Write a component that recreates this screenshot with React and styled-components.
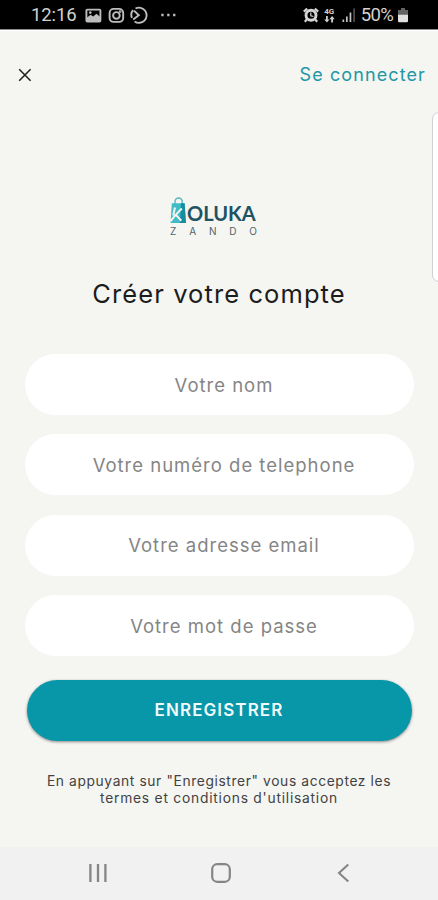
import * as React from 'react';
import styled, { createGlobalStyle } from 'styled-components';

const fields = [
    { name: 'name', label: 'Votre nom', type: 'text' },
    { name: 'phone', label: 'Votre numéro de telephone', type: 'tel' },
    { name: 'email', label: 'Votre adresse email', type: 'email' },
    { name: 'password', label: 'Votre mot de passe', type: 'password' },
]

function StatusIcons() {
    return (
        <svg width="92" height="20" viewBox="0 0 92 20" fill="none" stroke="#bdbdbd" strokeWidth="1.9">
            <rect x="1.4" y="4.6" width="14" height="12" rx="1" />
            <path d="M2 16v-3.4l3.6-2.8 2.6 1.8 3.2-2.8 3.6 3V16z" fill="#bdbdbd" stroke="none" />
            <circle cx="5.3" cy="7.6" r="1.3" fill="#bdbdbd" stroke="none" />
            <rect x="24.6" y="3.9" width="13.6" height="13" rx="4" />
            <circle cx="31.4" cy="10.4" r="3.3" />
            <circle cx="35.2" cy="6.6" r=".5" />
            <path d="M50.5 3.5A7.6 7.6 0 1 1 49.6 16.4M46.9 12.8A7.6 7.6 0 0 1 48 5.2M49 5.6l4.8 4.6-5.6 4.4" />
            <path d="M76.3 10h2.3M82.2 10h2.3M88.1 10h2.3" strokeWidth="2.3" />
        </svg>
    )
}

function AlarmIcon() {
    return (
        <svg width="16" height="16" viewBox="0 0 16 16" fill="none" stroke="#d4d4d4">
            <circle cx="8" cy="8.3" r="5" strokeWidth="2.9" />
            <path d="M7.8 5.5v3.2l2.6 .8" strokeWidth="1.2" />
            <path d="M.8 4.6l3.4-3M11.8 1.6l3.4 3M4 12.3l-2.2 2.5M12 12.3l2.2 2.5" strokeWidth="2.2" />
        </svg>
    )
}

function DataArrows() {
    return (
        <svg width="11" height="7" viewBox="0 0 11 7" fill="#d0d0d0">
            <path d="M2 0h1.8v3.4h1.7L2.9 6.6.2 3.4H2zM7.2 6.6H9V3.2h1.7L8.1 0 5.4 3.2h1.8z" />
        </svg>
    )
}

function SignalIcon() {
    return (
        <svg width="14" height="15" viewBox="0 0 14 15">
            <path d="M.5 11.5h1.7V14H.5zM4 8.5h1.7V14H4zM7.6 4.5h1.7V14H7.6z" fill="#c4c4c4" />
            <path d="M11.3.5h1.6V14h-1.6z" fill="#555" />
        </svg>
    )
}

function BatteryIcon() {
    return (
        <svg width="10" height="15" viewBox="0 0 10 15">
            <path d="M3 0h4v2h3v5H0V2h3z" fill="#636363" />
            <path d="M0 6.8h10V13a1.2 1.2 0 0 1-1.2 1.2H1.2A1.2 1.2 0 0 1 0 13z" fill="#e0e0e0" />
        </svg>
    )
}

function BagIcon() {
    return (
        <svg width="17" height="27" viewBox="0 0 17 27">
            <path d="M5 8V4.6a3.6 3.6 0 0 1 7.2 0V8" fill="none" stroke="#55b9c1" strokeWidth="1.4" />
            <path d="M1.8 6.2h12.8L16 26H.6z" fill="#3fbcc5" />
            <path d="M11 6.2h3.6L16 26H9.8z" fill="#188d9d" />
            <path d="M5 10.5L3.2 18.5M11.8 11.5L5 18.6.6 24M6 18.4c2 .8 3 3.6 5.4 5.2" fill="none" stroke="#f5f5f2" strokeWidth="2" />
        </svg>
    )
}

export default function App() {
    return (
        <>
            <GlobalStyle />
            <Screen>
                <StatusBar>
                    <StatusLeft>
                        <StatusText>12:16</StatusText>
                        <StatusIcons />
                    </StatusLeft>
                    <StatusRight>
                        <AlarmIcon />
                        <Network>
                            <NetworkLabel>4G</NetworkLabel>
                            <DataArrows />
                        </Network>
                        <SignalIcon />
                        <StatusText $tight>50%</StatusText>
                        <BatteryIcon />
                    </StatusRight>
                </StatusBar>
                <Header>
                    <CloseButton aria-label="Fermer">
                        <svg width="14" height="14" viewBox="0 0 14 14" stroke="#222" strokeWidth="1.6">
                            <path d="M1.2 1.2l11.4 11.6M12.6 1.2L1.2 12.8" />
                        </svg>
                    </CloseButton>
                    <LoginLink href="#">Se connecter</LoginLink>
                </Header>
                <Logo>
                    <LogoTop>
                        <BagIcon />
                        <LogoName>OLUKA</LogoName>
                    </LogoTop>
                    <LogoSub>
                        {'ZANDO'.split('').map((letter, i) => <span key={i}>{letter}</span>)}
                    </LogoSub>
                </Logo>
                <Title>Créer votre compte</Title>
                <Form onSubmit={(e) => e.preventDefault()}>
                    {fields.map((field) => (
                        <Field
                            key={field.name}
                            name={field.name}
                            type={field.type}
                            placeholder={field.label}
                        />
                    ))}
                    <SubmitButton>ENREGISTRER</SubmitButton>
                </Form>
                <Terms>
                    <TermsLine $spacing="0.62px">En appuyant sur "Enregistrer" vous acceptez les</TermsLine>
                    <TermsLine $spacing="0.77px">termes et conditions d'utilisation</TermsLine>
                </Terms>
                <AndroidNav>
                    <svg width="20" height="20" viewBox="0 0 20 20" stroke="#858585" strokeWidth="2.3">
                        <path d="M2.4 1v18M10 1v18M17.4 1v18" />
                    </svg>
                    <svg width="20" height="20" viewBox="0 0 20 20" fill="none" stroke="#858585" strokeWidth="2.2">
                        <rect x="1.2" y="1.2" width="17.6" height="17.6" rx="5" />
                    </svg>
                    <svg width="20" height="20" viewBox="0 0 20 20" fill="none" stroke="#858585" strokeWidth="2.1">
                        <path d="M15.3 1.5L6 10l9.3 8.5" />
                    </svg>
                </AndroidNav>
                <EdgePanel />
            </Screen>
        </>
    )
}

const GlobalStyle = createGlobalStyle`
  * {
    box-sizing: border-box;
  }
  body {
    margin: 0;
    background: #f5f5f2;
    font-family: Inter, "Noto Sans", sans-serif;
  }
  svg {
    display: block;
    flex: none;
  }
`

const Screen = styled.main`
  position: relative;
  display: flex;
  flex-direction: column;
  width: 438px;
  height: 900px;
  overflow: hidden;
  background: #f5f5f2;
`

const StatusBar = styled.header`
  display: flex;
  justify-content: space-between;
  align-items: center;
  height: 30px;
  flex: none;
  padding: 1px 30px 0 31px;
  background: #000;
  border-bottom: 1px solid #8a8a8a;
  box-shadow: 0 1px 0 #fff;
`

const StatusLeft = styled.div`
  display: flex;
  align-items: center;
  gap: 8px;
`

const StatusRight = styled.div`
  display: flex;
  align-items: center;
  gap: 5px;
`

const StatusText = styled.span`
  font-family: Roboto, sans-serif;
  font-size: 18.5px;
  line-height: 20px;
  color: #d2d2d2;
  letter-spacing: ${({ $tight }) => $tight ? '-0.7px' : '-0.1px'};
`

const Network = styled.div`
  display: flex;
  flex-direction: column;
  align-items: center;
  margin-right: 2px;
`

const NetworkLabel = styled.span`
  font: bold 8px/8px Roboto, sans-serif;
  color: #d0d0d0;
`

const Header = styled.nav`
  display: flex;
  justify-content: space-between;
  align-items: center;
  height: 90px;
  flex: none;
  padding: 0 12px 0 18px;
`

const CloseButton = styled.button`
  padding: 0;
  border: 0;
  background: none;
  cursor: pointer;
`

const LoginLink = styled.a`
  font-size: 18px;
  line-height: 24px;
  letter-spacing: 1.1px;
  color: #2397a3;
  text-decoration: none;
`

const Logo = styled.div`
  display: flex;
  flex-direction: column;
  width: 87px;
  margin: 77px 0 0 170px;
`

const LogoTop = styled.div`
  display: flex;
  align-items: flex-end;
  height: 27px;
`

const LogoName = styled.span`
  font-family: Lato, sans-serif;
  font-weight: bold;
  font-size: 20px;
  line-height: 21px;
  color: #1d5362;
`

const LogoSub = styled.div`
  display: flex;
  justify-content: space-between;
  margin-top: 1px;
  font-size: 10px;
  line-height: 12px;
  color: #51656c;
`

const Title = styled.h1`
  margin: 39px 0 0;
  font-size: 25.5px;
  font-weight: 400;
  line-height: 36px;
  letter-spacing: 1.1px;
  text-align: center;
  color: #1c1c1c;
`

const Form = styled.form`
  display: flex;
  flex-direction: column;
  gap: 19.4px;
  padding: 42px 24.5px 0;
`

const Field = styled.input`
  width: 100%;
  height: 61px;
  padding: 0 0 0 10px;
  border: 0;
  border-radius: 31px;
  background: #fff;
  font-family: inherit;
  font-size: 18.5px;
  text-align: center;
  letter-spacing: 1px;
  outline: none;
  &::placeholder {
    color: #858585;
    opacity: 1;
  }
`

const SubmitButton = styled.button`
  height: 61px;
  margin: 4px 2px 0;
  padding: 0 0 1px;
  border: 0;
  border-radius: 31px;
  background: #0896a9;
  box-shadow: 0 1px 3px rgba(0, 0, 0, .45);
  color: #f2fbfc;
  font-family: inherit;
  font-size: 17px;
  font-weight: 600;
  letter-spacing: 1.1px;
  cursor: pointer;
`

const Terms = styled.div`
  margin-top: 32px;
  text-align: center;
  color: #424242;
`

const TermsLine = styled.p`
  margin: 0;
  font-size: 13.8px;
  line-height: 17px;
  letter-spacing: ${({ $spacing }) => $spacing};
  white-space: nowrap;
`

const AndroidNav = styled.footer`
  display: flex;
  justify-content: space-between;
  align-items: center;
  height: 53px;
  flex: none;
  margin-top: auto;
  padding: 0 85px 2px 88px;
  background: #f1f1f1;
`

/* Samsung edge handle, overlaps the right side of the screen */
const EdgePanel = styled.aside`
  position: absolute;
  top: 112px;
  right: -10px;
  width: 16px;
  height: 170px;
  border: 1.5px solid #d0d0d0;
  border-radius: 7px;
  background: #fff;
`
